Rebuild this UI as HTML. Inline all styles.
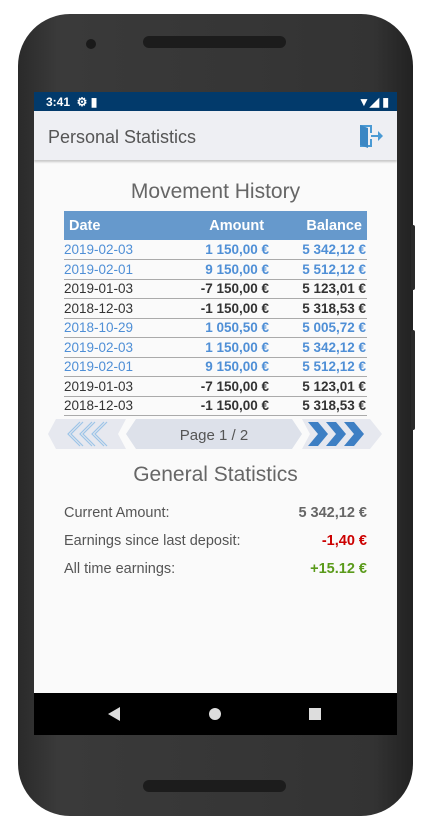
<!DOCTYPE html>
<html><head><meta charset="utf-8"><style>
*{margin:0;padding:0;box-sizing:border-box}
body{width:424px;height:828px;background:#fff;position:relative;overflow:hidden;font-family:"Liberation Sans",sans-serif}
.phone{position:absolute;left:18px;top:14px;width:395px;height:802px;border-radius:52px;background:linear-gradient(90deg,#2a2a2a,#3a3a3a 10%,#333 90%,#222);}
.btn{position:absolute;left:411px;width:4px;background:#2a2a2a;border-radius:2px}
.screen{position:absolute;left:34px;top:92px;width:363px;height:643px;background:#fafafa;overflow:hidden}
.sb{height:19px;background:#023a6b;color:#fff;font-size:12px;font-weight:bold;padding:3px 0 0 12px}
.ab{height:49px;background:#eeeff3;box-shadow:0 2px 2px rgba(0,0,0,.2);position:relative}
.ab span{position:absolute;left:14px;top:16px;font-size:18px;color:#555}
h2{position:absolute;width:100%;text-align:center;font-weight:normal;font-size:21px;color:#666}
table{position:absolute;left:30px;top:119px;width:303px;border-collapse:collapse;font-size:13.5px}
th{background:#6699cc;color:#fff;height:29px;font-size:14.5px;text-align:right;padding:0 5px}
th:first-child{text-align:left}
td{height:19.5px;border-bottom:1px solid #aaa;padding:0;text-align:right;font-weight:bold;color:#333}
td:first-child{text-align:left;font-weight:normal}
td:last-child{padding-right:1px}
tr.b td{color:#4f8fd6}
.st{position:absolute;left:30px;width:303px;font-size:14.5px;color:#555}
.st b{float:right;color:#666}
.nav{position:absolute;left:0;top:601px;width:363px;height:42px;background:#000}
</style></head><body>
<div class="phone">
<div style="position:absolute;left:68px;top:25px;width:10px;height:10px;border-radius:50%;background:#1a1a1a"></div>
<div style="position:absolute;left:125px;top:22px;width:143px;height:12px;border-radius:6px;background:#1c1c1c"></div>
<div style="position:absolute;left:125px;top:766px;width:143px;height:12px;border-radius:6px;background:#1c1c1c"></div>
</div>
<div class="btn" style="top:225px;height:65px"></div>
<div class="btn" style="top:330px;height:100px"></div>
<div class="screen">
<div class="sb">3:41 &nbsp;⚙ ▮<span style="float:right;margin-right:8px">▼◢ ▮</span></div>
<div class="ab"><span>Personal Statistics</span>
<svg style="position:absolute;left:324px;top:12px" width="26" height="26" viewBox="0 0 26 26"><path d="M2 2h12v8h-2V4H6v18h6v-6h2v8H2z" fill="#4a9ad4"/><path d="M2 2l8 3v20l-8-3z" fill="#3b87c4"/><path d="M13 12h7v-4l5 5-5 5v-4h-7z" fill="#4a9ad4"/></svg></div>
<h2 style="top:88px">Movement History</h2>
<table>
<tr><th>Date</th><th>Amount</th><th>Balance</th></tr>
<tr class="b"><td>2019-02-03</td><td>1 150,00 €</td><td>5 342,12 €</td></tr>
<tr class="b"><td>2019-02-01</td><td>9 150,00 €</td><td>5 512,12 €</td></tr>
<tr><td>2019-01-03</td><td>-7 150,00 €</td><td>5 123,01 €</td></tr>
<tr><td>2018-12-03</td><td>-1 150,00 €</td><td>5 318,53 €</td></tr>
<tr class="b"><td>2018-10-29</td><td>1 050,50 €</td><td>5 005,72 €</td></tr>
<tr class="b"><td>2019-02-03</td><td>1 150,00 €</td><td>5 342,12 €</td></tr>
<tr class="b"><td>2019-02-01</td><td>9 150,00 €</td><td>5 512,12 €</td></tr>
<tr><td>2019-01-03</td><td>-7 150,00 €</td><td>5 123,01 €</td></tr>
<tr><td>2018-12-03</td><td>-1 150,00 €</td><td>5 318,53 €</td></tr>
</table>
<svg style="position:absolute;left:14px;top:326px" width="336" height="32" viewBox="0 0 336 32">
<polygon points="0,16 8,1 78,1 70,16 78,31 8,31" fill="#e6e8ef"/>
<g fill="none" stroke="#9cc4e8" stroke-width="1.2"><path d="M32 4l-12 12 12 12M35 4l-12 12 12 12M44 4l-12 12 12 12M47 4l-12 12 12 12M56 4l-12 12 12 12M59 4l-12 12 12 12"/></g>
<polygon points="78,16 88,1 244,1 254,16 244,31 88,31" fill="#dde1ea"/>
<text x="166" y="22" text-anchor="middle" font-size="15" fill="#555" font-family="Liberation Sans">Page 1 / 2</text>
<polygon points="254,1 322,1 334,16 322,31 254,31 262,16" fill="#e6e8ef"/>
<g fill="#3d7fc4"><polygon points="260,4 270,4 280,16 270,28 260,28 270,16"/><polygon points="278,4 288,4 298,16 288,28 278,28 288,16"/><polygon points="296,4 306,4 316,16 306,28 296,28 306,16"/></g>
</svg>
<h2 style="top:371px">General Statistics</h2>
<div class="st" style="top:413px">Current Amount:<b>5 342,12 €</b></div>
<div class="st" style="top:441px">Earnings since last deposit:<b style="color:#c00">-1,40 €</b></div>
<div class="st" style="top:469px">All time earnings:<b style="color:#5a9a1a">+15.12 €</b></div>
<div class="nav">
<svg width="363" height="42"><polygon points="74,21 86,14 86,28" fill="#ddd"/><circle cx="181" cy="21" r="6" fill="#ddd"/><rect x="275" y="15" width="12" height="12" fill="#ddd"/></svg>
</div>
</div>
</body></html>
